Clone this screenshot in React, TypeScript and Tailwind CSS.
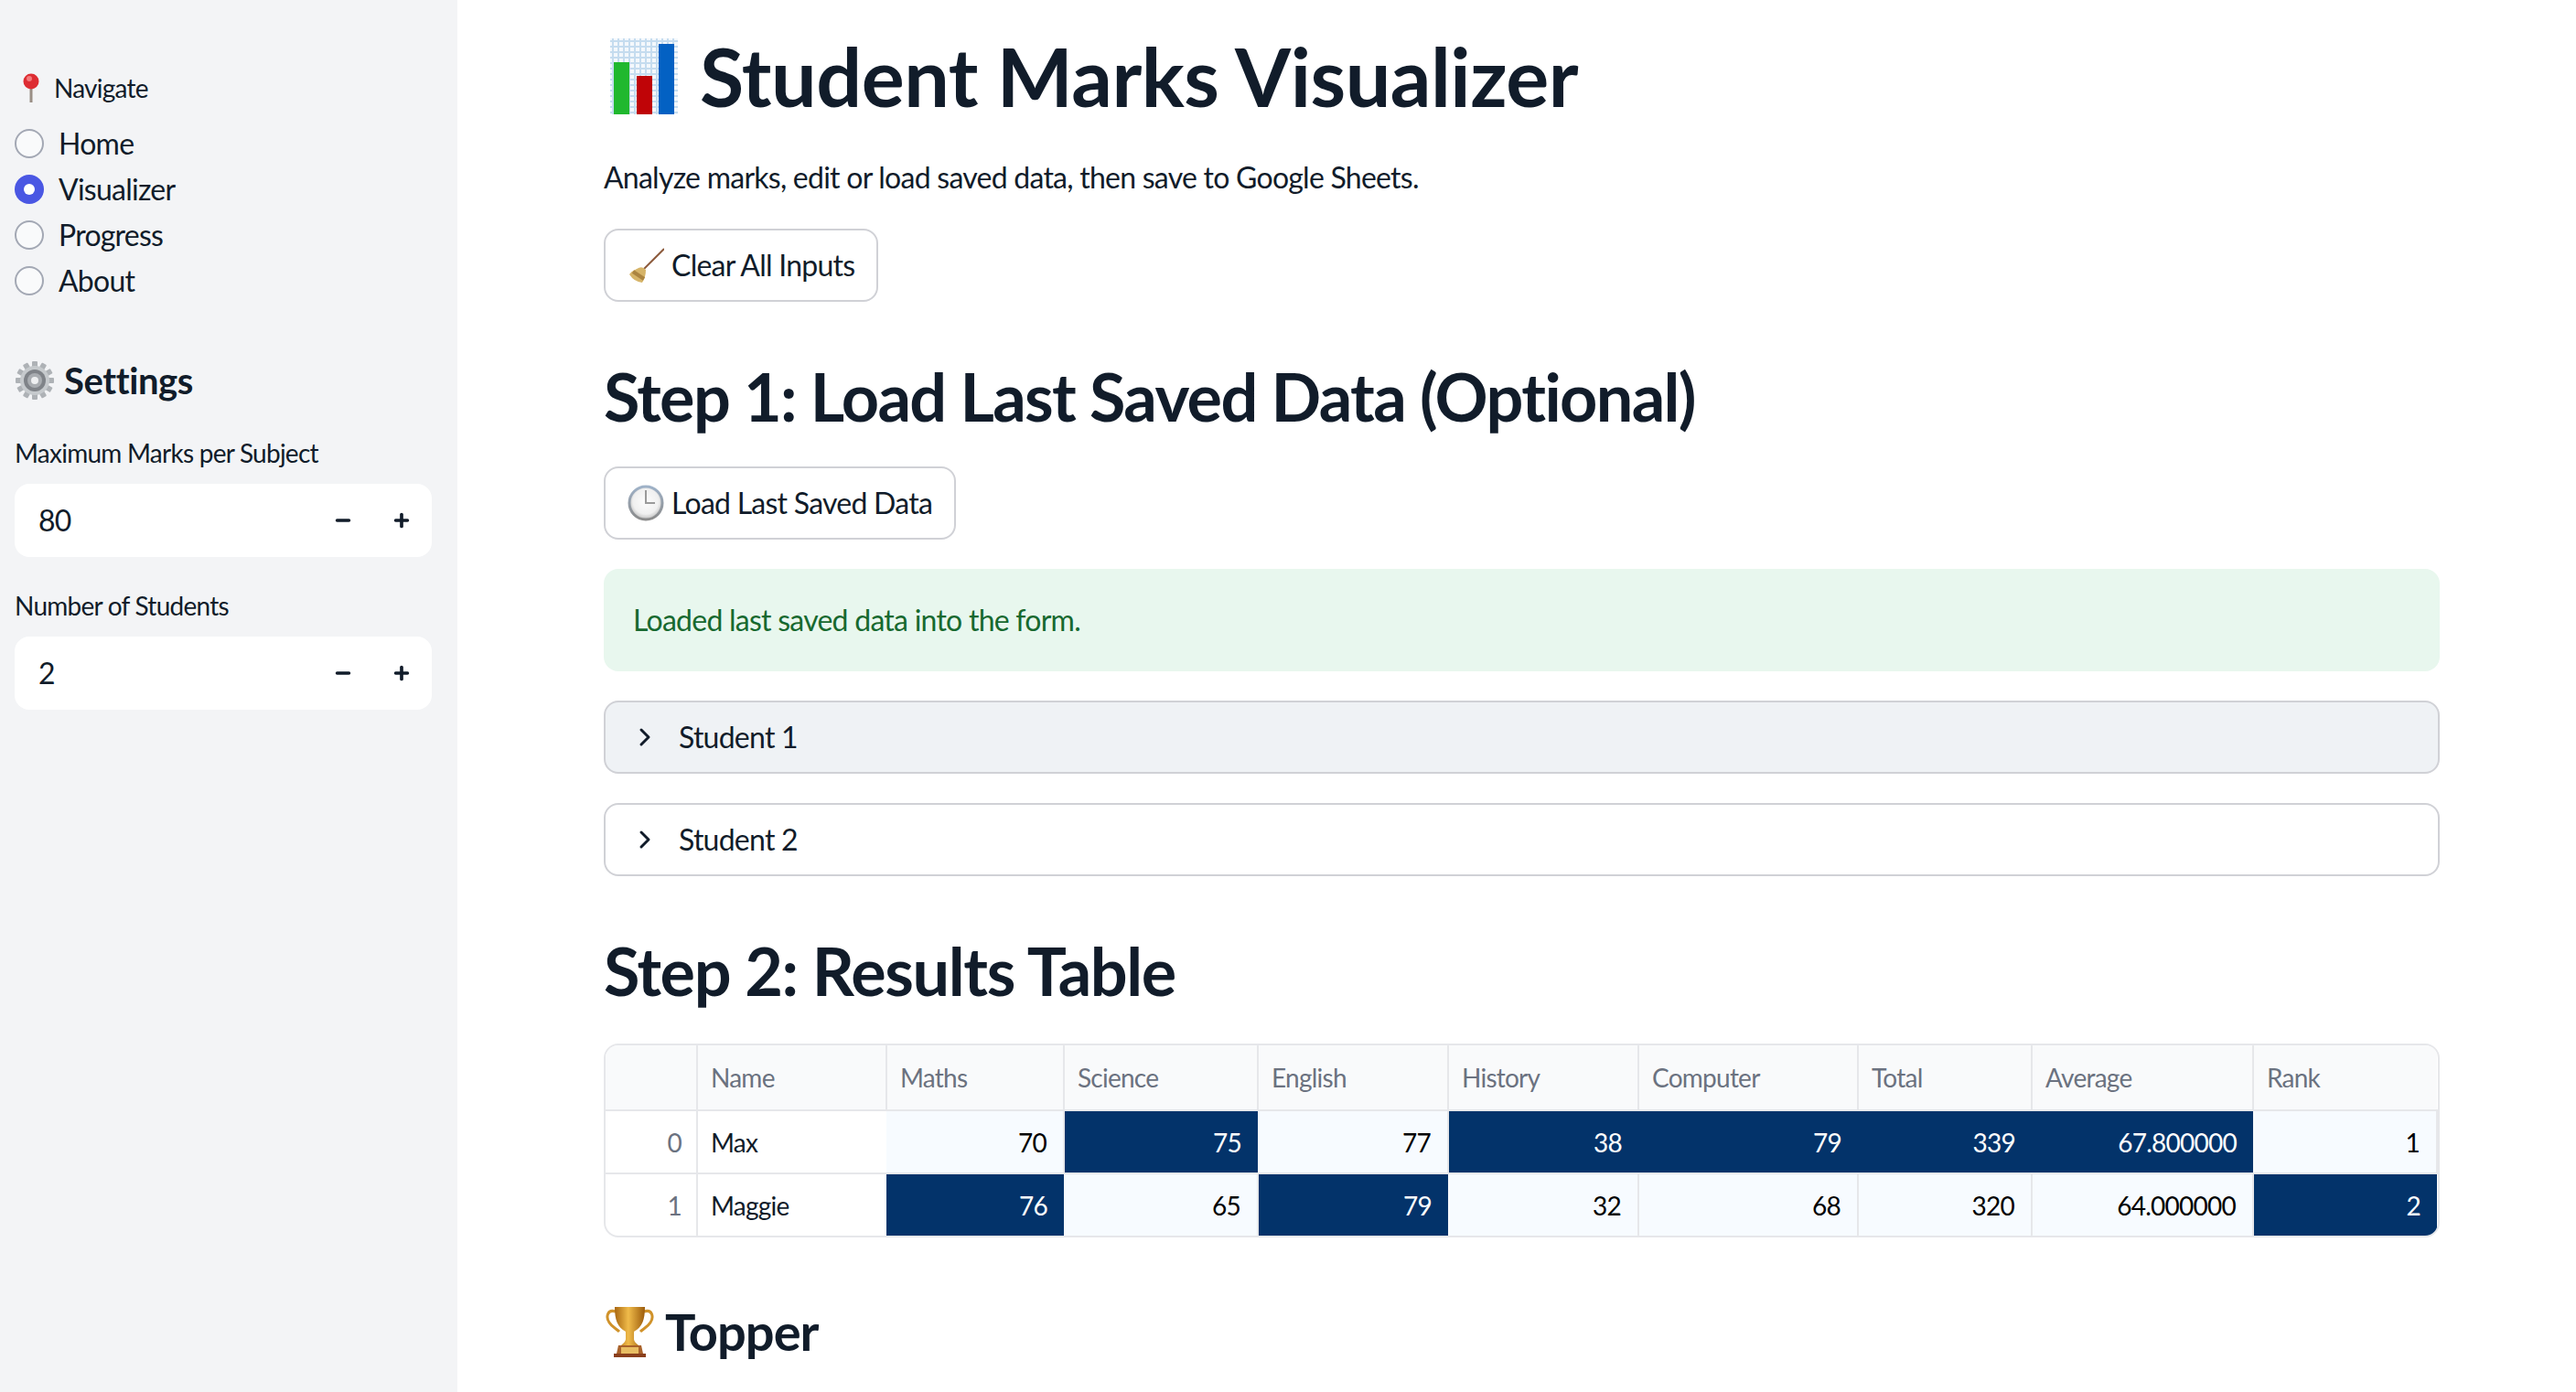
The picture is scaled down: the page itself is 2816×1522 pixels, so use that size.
import type { ReactNode } from "react";
import { ChevronRight, Minus, Plus } from "lucide-react";

const BarChartEmoji = () => (
  <svg width="74" height="83" viewBox="0 0 74 83">
    <defs>
      <pattern id="grid" width="6" height="6" patternUnits="userSpaceOnUse">
        <rect width="6" height="6" fill="#f4f8fc" />
        <path d="M3 0V6M0 3H6" stroke="#c5dcef" strokeWidth="2" />
      </pattern>
    </defs>
    <rect width="74" height="83" fill="url(#grid)" />
    <rect x="4" y="26" width="17" height="57" fill="#20b82e" />
    <rect x="29" y="41" width="17" height="42" fill="#bf0407" />
    <rect x="53" y="6" width="17" height="77" fill="#0361c3" />
  </svg>
);

const BroomEmoji = () => (
  <svg width="40" height="40" viewBox="0 0 40 40">
    <path d="M40 2 18 24" stroke="#8c5a3c" strokeWidth="2" />
    <path d="M10 24Q16 20 20 25Q20 33 16 39Q7 38 2 30Q5 26 10 24Z" fill="#d6b468" />
    <path d="M6 27 18 35" stroke="#ab8440" strokeWidth="4" />
  </svg>
);

const ClockEmoji = () => (
  <svg width="40" height="40" viewBox="0 0 40 40">
    <defs>
      <radialGradient id="face" cx="50%" cy="45%" r="55%">
        <stop offset="0%" stopColor="#fcfcfc" />
        <stop offset="70%" stopColor="#f0f0f0" />
        <stop offset="100%" stopColor="#bdbdbd" />
      </radialGradient>
      <linearGradient id="rim" x1="0" x2="0" y1="0" y2="1">
        <stop offset="0%" stopColor="#9fb2c8" />
        <stop offset="100%" stopColor="#8b8b8b" />
      </linearGradient>
    </defs>
    <circle cx="20" cy="20" r="18" fill="url(#face)" stroke="url(#rim)" strokeWidth="3" />
    <path d="M20 6V20H30" fill="none" stroke="#9a9a9a" strokeWidth="2" />
  </svg>
);

const TrophyEmoji = () => (
  <svg width="53" height="56" viewBox="0 0 53 56">
    <defs>
      <linearGradient id="gold" x1="0" x2="1" y1="0" y2="0">
        <stop offset="0%" stopColor="#a8660f" />
        <stop offset="45%" stopColor="#f0bb4a" />
        <stop offset="100%" stopColor="#9c5c0c" />
      </linearGradient>
    </defs>
    <path d="M11 6C2 3 0 12 4 18c3 5 8 7 11 10M42 6c9-3 11 6 7 12-3 5-8 7-11 10" fill="none" stroke="#d0922a" strokeWidth="3" />
    <path d="M10 1h33c0 14-3 22-12 27v8c0 3 3 5 5 7H17c2-2 5-4 5-7v-8C13 23 10 15 10 1z" fill="url(#gold)" />
    <path d="M14 43H39L41 52H12Z" fill="#a9622b" />
    <rect x="17" y="45" width="19" height="7" fill="#e8bd62" />
    <rect x="9" y="52" width="35" height="4" fill="#8a3f1c" />
  </svg>
);

const GearEmoji = () => {
  const teeth = Array.from({ length: 12 }, (_, i) => i * 30);
  return (
    <svg width="44" height="44" viewBox="0 0 44 44">
      {teeth.map((a) => (
        <rect key={a} x="19" y="1" width="6" height="9" rx="1" fill="#aeb2b6" transform={`rotate(${a} 22 22)`} />
      ))}
      <circle cx="22" cy="22" r="16" fill="#c6cacd" />
      <circle cx="22" cy="22" r="12" fill="#7f8388" />
      <circle cx="22" cy="22" r="8" fill="#a9adb1" />
      <circle cx="22" cy="22" r="4" fill="#eef0f1" />
    </svg>
  );
};

const PinEmoji = () => (
  <svg width="20" height="32" viewBox="0 0 20 32">
    <rect x="8.5" y="14" width="3" height="18" fill="#9a8f86" />
    <circle cx="10" cy="9" r="8.5" fill="#dd2d33" />
    <circle cx="8" cy="6" r="3" fill="#f37a7c" />
  </svg>
);

const Radio = ({ label, checked }: { label: string; checked?: boolean }) => (
  <div className="flex items-center h-[50px] gap-4">
    {checked ? (
      <span className="w-8 h-8 rounded-full bg-[#4a57e3] flex items-center justify-center">
        <span className="w-3 h-3 rounded-full bg-white" />
      </span>
    ) : (
      <span className="w-8 h-8 rounded-full border-2 border-[#a3a8b4] bg-[#f9fafb]" />
    )}
    <span className="text-[32px] leading-none text-[#111c2a]">{label}</span>
  </div>
);

const NumberField = ({ label, value }: { label: string; value: string }) => (
  <div>
    <div className="text-[28px] leading-[40px] text-[#111c2a]">{label}</div>
    <div className="mt-[14px] h-20 rounded-2xl bg-white flex items-center pl-[26px] pr-[22px] text-[32px] text-[#111c2a]">
      <span className="flex-1">{value}</span>
      <Minus size={22} strokeWidth={4} className="mr-[42px]" />
      <Plus size={22} strokeWidth={4} />
    </div>
  </div>
);

const Sidebar = () => (
  <aside className="w-[500px] shrink-0 bg-[#f3f4f6] pt-[72px] pl-4 pr-[28px]">
    <div className="flex items-center gap-[15px] h-[48px] pl-2">
      <PinEmoji />
      <span className="text-[28px] text-[#111c2a]">Navigate</span>
    </div>
    <div className="mt-3">
      <Radio label="Home" />
      <Radio label="Visualizer" checked />
      <Radio label="Progress" />
      <Radio label="About" />
    </div>
    <div className="mt-[54px] flex items-center gap-[10px] h-[60px]">
      <GearEmoji />
      <span className="text-[40px] font-bold tracking-[-0.4px] text-[#111c2a]">Settings</span>
    </div>
    <div className="mt-[29px] flex flex-col gap-[33px]">
      <NumberField label="Maximum Marks per Subject" value="80" />
      <NumberField label="Number of Students" value="2" />
    </div>
  </aside>
);

const Expander = ({ label, gray }: { label: string; gray?: boolean }) => (
  <div className={`h-20 rounded-2xl border-2 border-[#d0d1d6] flex items-center pl-[27px] gap-[21px] text-[32px] text-[#111c2a] ${gray ? "bg-[#eff2f5]" : "bg-white"}`}>
    <ChevronRight size={32} strokeWidth={2.25} />
    <span>{label}</span>
  </div>
);

const ActionButton = ({ icon, label }: { icon: ReactNode; label: string }) => (
  <button className="h-20 rounded-2xl border-2 border-[#d0d1d6] bg-white pl-6 pr-6 flex items-center gap-2 text-[32px] text-[#111c2a]">
    {icon}
    <span>{label}</span>
  </button>
);

const columns = [
  { name: "", width: 100 },
  { name: "Name", width: 207 },
  { name: "Maths", width: 194 },
  { name: "Science", width: 212 },
  { name: "English", width: 208 },
  { name: "History", width: 208 },
  { name: "Computer", width: 240 },
  { name: "Total", width: 190 },
  { name: "Average", width: 242 },
  { name: "Rank", width: 201 },
];

const rows = [
  { index: 0, name: "Max", cells: [["70", false], ["75", true], ["77", false], ["38", true], ["79", true], ["339", true], ["67.800000", true], ["1", false]] },
  { index: 1, name: "Maggie", cells: [["76", true], ["65", false], ["79", true], ["32", false], ["68", false], ["320", false], ["64.000000", false], ["2", true]] },
] as { index: number; name: string; cells: [string, boolean][] }[];

const ResultsTable = () => (
  <div className="rounded-2xl border-2 border-[#e6e7ea] overflow-hidden text-[28px]">
    <table className="w-full border-collapse table-fixed">
      <colgroup>
        {columns.map((c) => (
          <col key={c.name} style={{ width: c.width }} />
        ))}
      </colgroup>
      <thead>
        <tr className="h-[71px] bg-[#f9fafb] border-b-2 border-[#e6e7ea]">
          {columns.map((c, i) => (
            <th key={c.name} className={`text-left font-normal text-[#6b7280] px-[14px] ${i < columns.length - 1 ? "border-r-2 border-[#e6e7ea]" : ""}`}>
              {c.name}
            </th>
          ))}
        </tr>
      </thead>
      <tbody>
        {rows.map((r, ri) => (
          <tr key={r.index} className={ri === 0 ? "h-[69px] border-b-2 border-[#e6e7ea]" : "h-[68px]"}>
            <td className="text-right text-[#6b7280] px-4 border-r-2 border-[#e6e7ea]">{r.index}</td>
            <td className="text-[#111c2a] px-[14px]">{r.name}</td>
            {r.cells.map(([v, dark], ci) => (
              <td key={ci} className={`text-right px-[18px] ${dark ? "bg-[#03336a] text-white" : "bg-[#f7fbff] text-black border-r-2 border-[#e6e7ea]"}`}>
                {v}
              </td>
            ))}
          </tr>
        ))}
      </tbody>
    </table>
  </div>
);

export default function App() {
  return (
    <div className="flex h-[1522px] overflow-hidden bg-white font-['Lato','Noto_Sans',sans-serif] tracking-[-0.75px]">
      <Sidebar />
      <main className="flex-1 pl-[160px] pr-[150px]">
        <h1 className="mt-[38px] h-[90px] flex items-center gap-6 text-[88px] font-bold text-[#111c2a] tracking-[-0.5px]">
          <span className="ml-[7px]">
            <BarChartEmoji />
          </span>
          <span>Student Marks Visualizer</span>
        </h1>
        <p className="mt-[42px] text-[32px] leading-[48px] text-[#111c2a]">
          Analyze marks, edit or load saved data, then save to Google Sheets.
        </p>
        <div className="mt-8 flex">
          <ActionButton icon={<BroomEmoji />} label="Clear All Inputs" />
        </div>
        <h2 className="mt-[58px] text-[72px] leading-[90px] font-bold text-[#111c2a] tracking-[-1.65px]">
          Step 1: Load Last Saved Data (Optional)
        </h2>
        <div className="mt-8 flex">
          <ActionButton icon={<ClockEmoji />} label="Load Last Saved Data" />
        </div>
        <div className="mt-8 h-[112px] rounded-2xl bg-[#e8f7ee] flex items-center pl-8 text-[32px] text-[#17692f]">
          Loaded last saved data into the form.
        </div>
        <div className="mt-8 flex flex-col gap-8">
          <Expander label="Student 1" gray />
          <Expander label="Student 2" />
        </div>
        <h2 className="mt-[58px] text-[72px] leading-[90px] font-bold text-[#111c2a] tracking-[-1.4px]">
          Step 2: Results Table
        </h2>
        <div className="mt-[35px]">
          <ResultsTable />
        </div>
        <h3 className="mt-[68px] flex items-center gap-3 text-[56px] leading-[70px] font-bold text-[#111c2a] tracking-[-1px]">
          <span className="ml-[2px]">
            <TrophyEmoji />
          </span>
          <span>Topper</span>
        </h3>
      </main>
    </div>
  );
}
